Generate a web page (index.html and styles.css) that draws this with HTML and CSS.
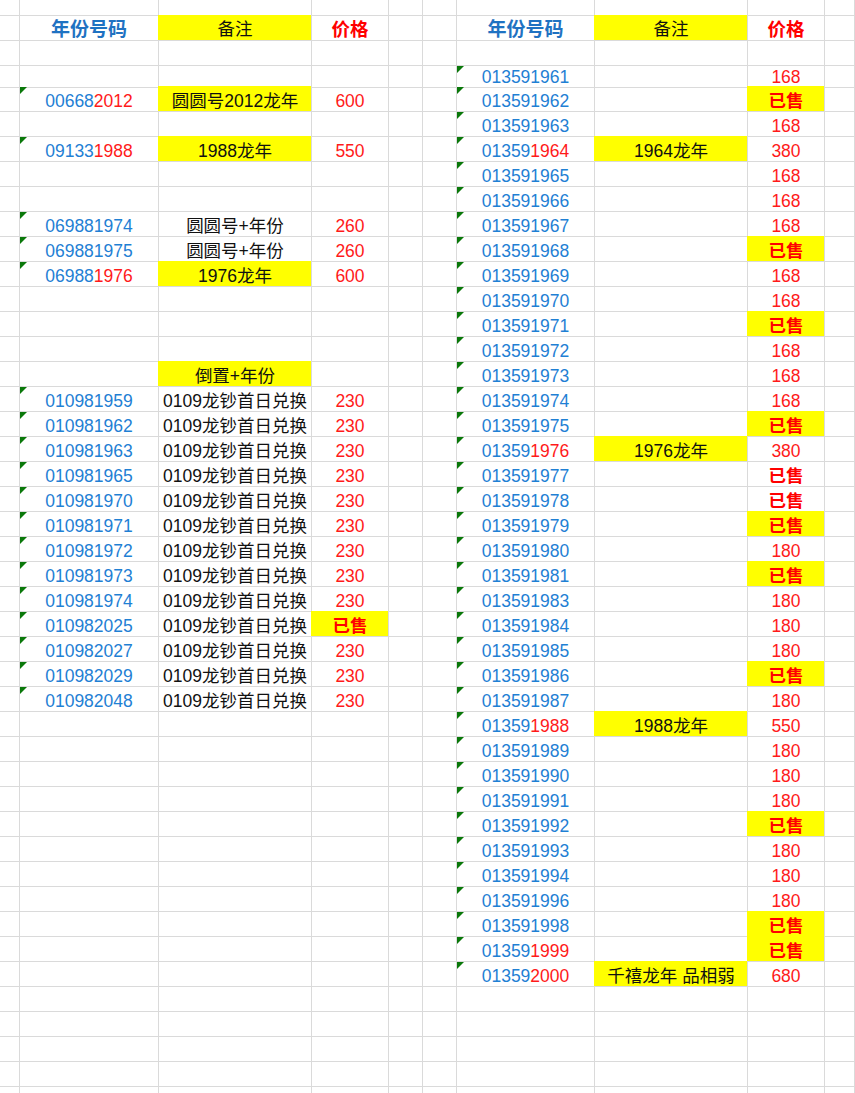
FILE: index.html
```html
<!DOCTYPE html>
<html lang="zh-CN">
<head>
<meta charset="utf-8">
<title>年份号码</title>
<link rel="stylesheet" href="styles.css">
</head>
<body>
<div class="sheet">
  <div class="row top"><span></span><span></span><span></span><span></span><span></span><span></span><span></span><span></span><span></span><span></span></div>
  <div class="row head"><span></span><span class="hb">年份号码</span><span class="y">备注</span><span class="hr">价格</span><span></span><span></span><span class="hb">年份号码</span><span class="y">备注</span><span class="hr">价格</span><span></span></div>
  <div class="row"><span></span><span></span><span></span><span></span><span></span><span></span><span></span><span></span><span></span><span></span></div>
  <div class="row short"><span></span><span></span><span></span><span></span><span></span><span></span><span class="n t">013591961</span><span></span><span class="p">168</span><span></span></div>

  <div class="row"><span></span><span class="n t">00668<em>2012</em></span><span class="y">圆圆号2012龙年</span><span class="p">600</span><span></span><span></span><span class="n t">013591962</span><span></span><span class="s y">已售</span><span></span></div>
  <div class="row"><span></span><span></span><span></span><span></span><span></span><span></span><span class="n t">013591963</span><span></span><span class="p">168</span><span></span></div>
  <div class="row"><span></span><span class="n t">09133<em>1988</em></span><span class="y">1988龙年</span><span class="p">550</span><span></span><span></span><span class="n t">01359<em>1964</em></span><span class="y">1964龙年</span><span class="p">380</span><span></span></div>
  <div class="row"><span></span><span></span><span></span><span></span><span></span><span></span><span class="n t">013591965</span><span></span><span class="p">168</span><span></span></div>
  <div class="row"><span></span><span></span><span></span><span></span><span></span><span></span><span class="n t">013591966</span><span></span><span class="p">168</span><span></span></div>
  <div class="row"><span></span><span class="n t">069881974</span><span>圆圆号+年份</span><span class="p">260</span><span></span><span></span><span class="n t">013591967</span><span></span><span class="p">168</span><span></span></div>
  <div class="row"><span></span><span class="n t">069881975</span><span>圆圆号+年份</span><span class="p">260</span><span></span><span></span><span class="n t">013591968</span><span></span><span class="s y">已售</span><span></span></div>
  <div class="row"><span></span><span class="n t">06988<em>1976</em></span><span class="y">1976龙年</span><span class="p">600</span><span></span><span></span><span class="n t">013591969</span><span></span><span class="p">168</span><span></span></div>
  <div class="row"><span></span><span></span><span></span><span></span><span></span><span></span><span class="n t">013591970</span><span></span><span class="p">168</span><span></span></div>
  <div class="row"><span></span><span></span><span></span><span></span><span></span><span></span><span class="n t">013591971</span><span></span><span class="s y">已售</span><span></span></div>
  <div class="row"><span></span><span></span><span></span><span></span><span></span><span></span><span class="n t">013591972</span><span></span><span class="p">168</span><span></span></div>
  <div class="row"><span></span><span></span><span class="y">倒置+年份</span><span></span><span></span><span></span><span class="n t">013591973</span><span></span><span class="p">168</span><span></span></div>
  <div class="row"><span></span><span class="n t">010981959</span><span>0109龙钞首日兑换</span><span class="p">230</span><span></span><span></span><span class="n t">013591974</span><span></span><span class="p">168</span><span></span></div>
  <div class="row"><span></span><span class="n t">010981962</span><span>0109龙钞首日兑换</span><span class="p">230</span><span></span><span></span><span class="n t">013591975</span><span></span><span class="s y">已售</span><span></span></div>
  <div class="row"><span></span><span class="n t">010981963</span><span>0109龙钞首日兑换</span><span class="p">230</span><span></span><span></span><span class="n t">01359<em>1976</em></span><span class="y">1976龙年</span><span class="p">380</span><span></span></div>
  <div class="row"><span></span><span class="n t">010981965</span><span>0109龙钞首日兑换</span><span class="p">230</span><span></span><span></span><span class="n t">013591977</span><span></span><span class="s">已售</span><span></span></div>
  <div class="row"><span></span><span class="n t">010981970</span><span>0109龙钞首日兑换</span><span class="p">230</span><span></span><span></span><span class="n t">013591978</span><span></span><span class="s">已售</span><span></span></div>
  <div class="row"><span></span><span class="n t">010981971</span><span>0109龙钞首日兑换</span><span class="p">230</span><span></span><span></span><span class="n t">013591979</span><span></span><span class="s y">已售</span><span></span></div>
  <div class="row"><span></span><span class="n t">010981972</span><span>0109龙钞首日兑换</span><span class="p">230</span><span></span><span></span><span class="n t">013591980</span><span></span><span class="p">180</span><span></span></div>
  <div class="row"><span></span><span class="n t">010981973</span><span>0109龙钞首日兑换</span><span class="p">230</span><span></span><span></span><span class="n t">013591981</span><span></span><span class="s y">已售</span><span></span></div>
  <div class="row"><span></span><span class="n t">010981974</span><span>0109龙钞首日兑换</span><span class="p">230</span><span></span><span></span><span class="n t">013591983</span><span></span><span class="p">180</span><span></span></div>
  <div class="row"><span></span><span class="n t">010982025</span><span>0109龙钞首日兑换</span><span class="s y">已售</span><span></span><span></span><span class="n t">013591984</span><span></span><span class="p">180</span><span></span></div>
  <div class="row"><span></span><span class="n t">010982027</span><span>0109龙钞首日兑换</span><span class="p">230</span><span></span><span></span><span class="n t">013591985</span><span></span><span class="p">180</span><span></span></div>
  <div class="row"><span></span><span class="n t">010982029</span><span>0109龙钞首日兑换</span><span class="p">230</span><span></span><span></span><span class="n t">013591986</span><span></span><span class="s y">已售</span><span></span></div>
  <div class="row"><span></span><span class="n t">010982048</span><span>0109龙钞首日兑换</span><span class="p">230</span><span></span><span></span><span class="n t">013591987</span><span></span><span class="p">180</span><span></span></div>
  <div class="row"><span></span><span></span><span></span><span></span><span></span><span></span><span class="n t">01359<em>1988</em></span><span class="y">1988龙年</span><span class="p">550</span><span></span></div>
  <div class="row"><span></span><span></span><span></span><span></span><span></span><span></span><span class="n t">013591989</span><span></span><span class="p">180</span><span></span></div>
  <div class="row"><span></span><span></span><span></span><span></span><span></span><span></span><span class="n t">013591990</span><span></span><span class="p">180</span><span></span></div>
  <div class="row"><span></span><span></span><span></span><span></span><span></span><span></span><span class="n t">013591991</span><span></span><span class="p">180</span><span></span></div>
  <div class="row"><span></span><span></span><span></span><span></span><span></span><span></span><span class="n t">013591992</span><span></span><span class="s y">已售</span><span></span></div>
  <div class="row"><span></span><span></span><span></span><span></span><span></span><span></span><span class="n t">013591993</span><span></span><span class="p">180</span><span></span></div>
  <div class="row"><span></span><span></span><span></span><span></span><span></span><span></span><span class="n t">013591994</span><span></span><span class="p">180</span><span></span></div>
  <div class="row"><span></span><span></span><span></span><span></span><span></span><span></span><span class="n t">013591996</span><span></span><span class="p">180</span><span></span></div>
  <div class="row"><span></span><span></span><span></span><span></span><span></span><span></span><span class="n t">013591998</span><span></span><span class="s y">已售</span><span></span></div>
  <div class="row"><span></span><span></span><span></span><span></span><span></span><span></span><span class="n t">01359<em>1999</em></span><span></span><span class="s y">已售</span><span></span></div>
  <div class="row"><span></span><span></span><span></span><span></span><span></span><span></span><span class="n t">01359<em>2000</em></span><span class="y">千禧龙年 品相弱</span><span class="p">680</span><span></span></div>
  <div class="row"><span></span><span></span><span></span><span></span><span></span><span></span><span></span><span></span><span></span><span></span></div>
  <div class="row"><span></span><span></span><span></span><span></span><span></span><span></span><span></span><span></span><span></span><span></span></div>
  <div class="row"><span></span><span></span><span></span><span></span><span></span><span></span><span></span><span></span><span></span><span></span></div>
  <div class="row"><span></span><span></span><span></span><span></span><span></span><span></span><span></span><span></span><span></span><span></span></div>
  <div class="row"><span></span><span></span><span></span><span></span><span></span><span></span><span></span><span></span><span></span><span></span></div>
</div>
</body>
</html>
```

FILE: styles.css
```css
html, body {
  margin: 0;
  padding: 0;
  background: #ffffff;
}

body {
  width: 855px;
  height: 1093px;
  overflow: hidden;
  font-family: "Liberation Sans", "Noto Sans CJK SC", sans-serif;
  font-size: 17.5px;
  color: #111111;
}

.sheet {
  display: flex;
  flex-direction: column;
}

.row {
  display: grid;
  grid-template-columns: 20px 139px 153px 77px 34px 34px 138px 153px 77px 30px;
  height: 25px;
  flex: 0 0 auto;
}

.row.top {
  height: 16px;
}

.row > span {
  position: relative;
  box-sizing: border-box;
  border-right: 1px solid #dadada;
  border-bottom: 1px solid #dadada;
  padding-top: 4px;
  line-height: 20px;
  text-align: center;
  white-space: nowrap;
}

.row.top > span {
  padding-top: 0;
}

.row.head > span {
  padding-top: 3px;
  line-height: 21px;
}

.row.short > span {
  padding-top: 2px;
  line-height: 19px;
}

.row.short {
  height: 21px;
}

.hb {
  font-weight: bold;
  font-size: 19px;
  color: #1f72c2;
}

.hr {
  font-weight: bold;
  font-size: 18.5px;
  color: #ff0000;
}

.n {
  color: #1f80d4;
}

.n em {
  font-style: normal;
  color: #ff1a1a;
}

.p {
  color: #ff1a1a;
}

.s {
  font-weight: bold;
  color: #ff0000;
}

.y {
  background: #ffff00;
  box-shadow: -1px -1px 0 #ffff00;
}

.t::before {
  content: "";
  position: absolute;
  left: 0;
  top: 0;
  width: 0;
  height: 0;
  border-top: 7px solid #0a780a;
  border-right: 7px solid transparent;
}
```
